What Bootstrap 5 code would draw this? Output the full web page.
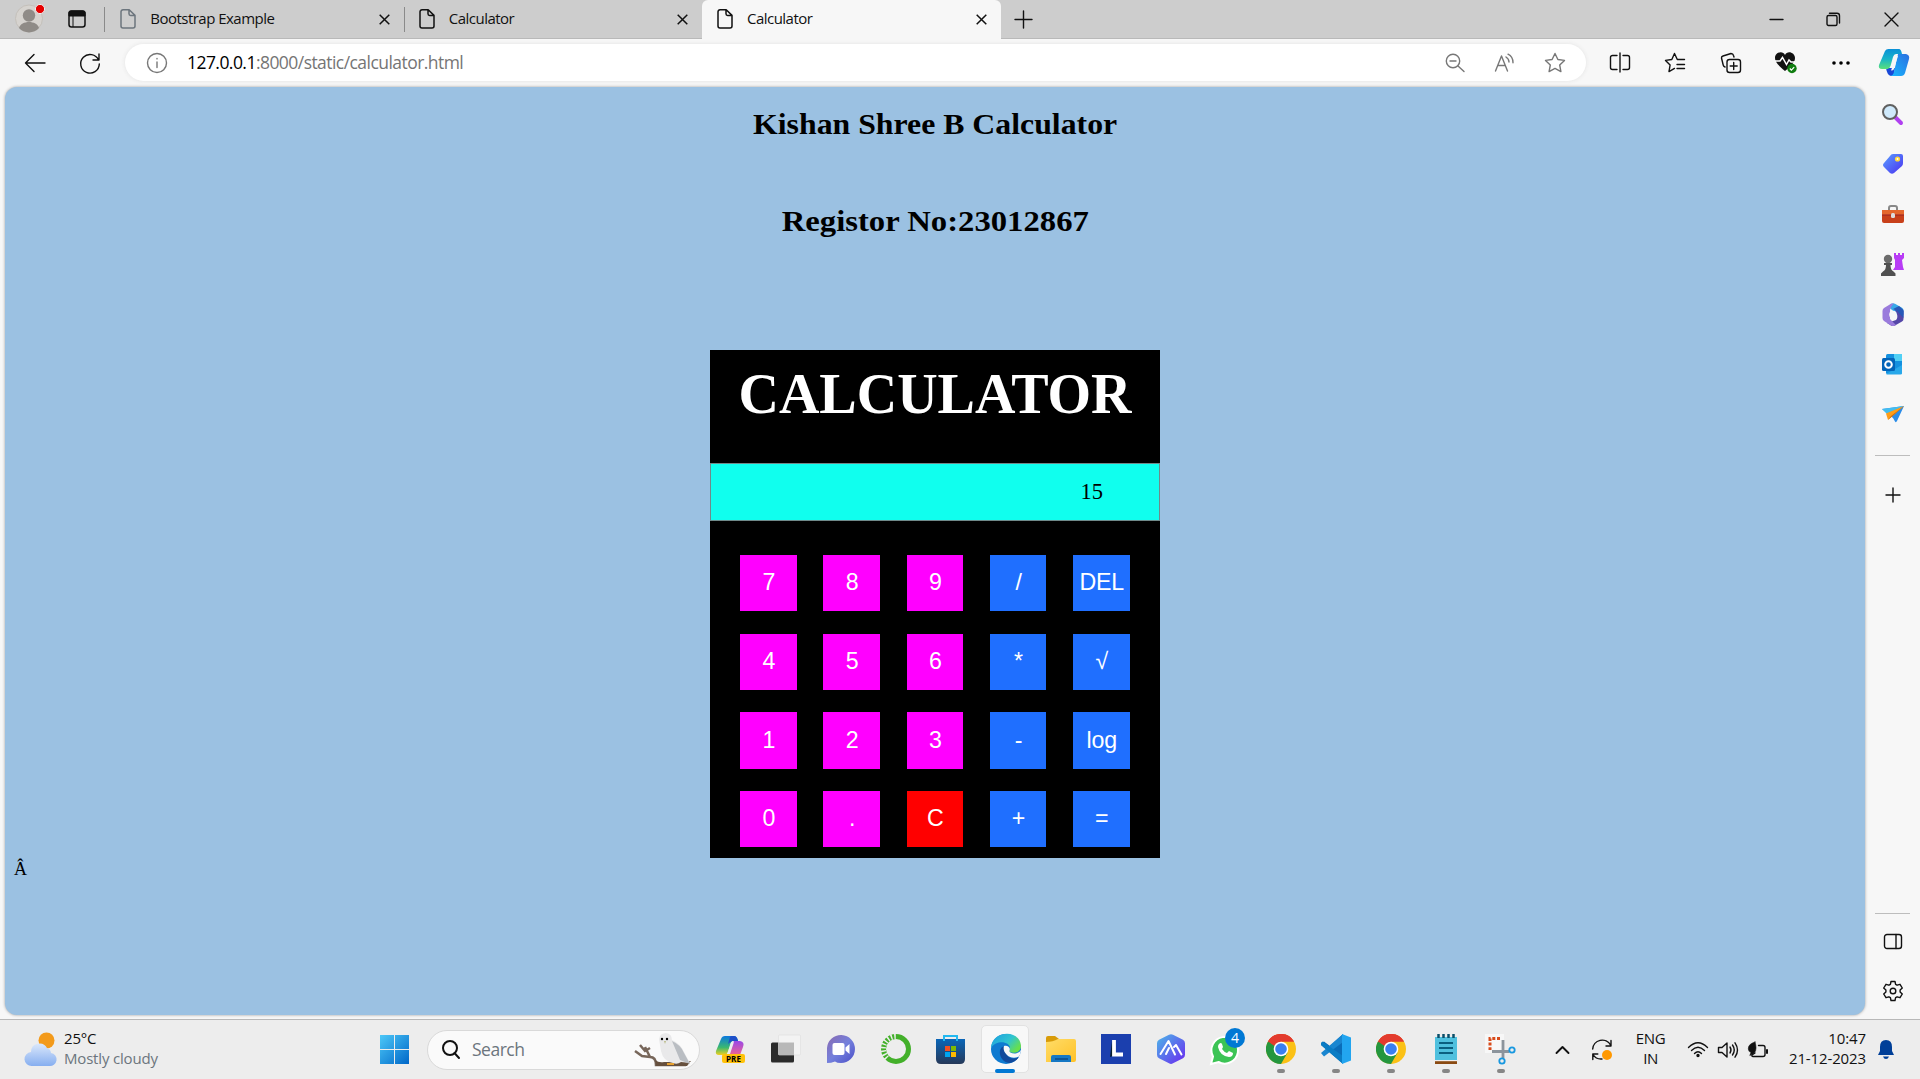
<!DOCTYPE html>
<html lang="en">
<head>
<meta charset="utf-8">
<title>Calculator</title>
<link rel="stylesheet" href="https://cdn.jsdelivr.net/npm/bootstrap@5.3.0/dist/css/bootstrap.min.css">
<style>
body{width:1920px;height:1079px;overflow:hidden;background:#f7f7f7;font-family:"Open Sans","Noto Sans",sans-serif;font-size:15px;line-height:20px;color:#111}
svg{display:block;overflow:visible;flex:none}
.ln{fill:none;stroke:#111;stroke-width:1.4;stroke-linecap:round;stroke-linejoin:round}
.gy{stroke:#777}
.tabstrip{height:39px;background:#cdcdcd;border-bottom:1px solid #b9b9b9;padding-left:9px}
.tabx{height:38px;white-space:nowrap;padding-right:14px}
.tab-on{width:299px;height:39px;background:#f7f7f7;border-radius:6px 6px 0 0;padding-bottom:1px}
.tab-off{width:298.5px}
.tab-first{width:299.5px}
.vsep{width:1.3px;height:25px;background:#8a8a8a}
.cellw{flex:none;display:flex;align-items:center;justify-content:center}
.tabt{letter-spacing:-.52px;margin-left:14px;margin-right:auto;padding-bottom:2px}
.toolbar{height:48px;padding-bottom:1px}
.urlbar{width:1461px;height:37px;border-radius:19px;background:#fff;box-shadow:0 0 4px #e3e3e3}
.urlt{font-size:17.5px;letter-spacing:-.55px;color:#757575;padding-bottom:1px;margin-left:-1px}
.pagebox{width:1860px;height:928px;background:#9bc1e2;border-radius:12px;box-shadow:0 0 3px #999;margin-left:5px}
.hd{font:bold 29px/34px "Georgia","Liberation Serif",serif;color:#000;margin:0;white-space:nowrap}
.hd-a{margin-top:20px;transform:scaleX(1.096)}
.hd-b{margin-top:63px;transform:scaleX(1.127)}
.calc{width:450px;height:508px;background:#000;margin-top:112px}
.calct{font:bold 56px/64px "Times New Roman","Liberation Serif",serif;color:#fff;margin:0;height:113px;padding-top:12px}
.disp{height:58px;background:#10ffee;border:1px solid #6f8a8a;font:22.5px/55px "Times New Roman","Liberation Serif",serif;color:#000;padding-right:56px}
.keys{display:grid;grid-template-columns:repeat(5,56.5px);grid-auto-rows:56.3px;column-gap:26.75px;row-gap:22.4px;padding:34px 0 0 30px}
.key{border:0;border-radius:0;padding:0 0 2px 1px;background:#f0f;color:#fff;font:23.2px/54px Arial,"Liberation Sans",sans-serif;letter-spacing:-.2px}
.op{background:#1f6fff}.clr{background:#f00}
.aa{font:18px/20px "Times New Roman","Liberation Serif",serif;color:#000;padding:1px 0 0 9px}
.side{width:55px;padding-top:2px}
.side .cellw{width:55px;height:50px}
.hsep{width:35px;height:1px;background:#bdbdbd}
.taskbar{height:60px;background:#ededed;border-top:1px solid #b8b8b8;margin-top:4px}
.pill{width:273px;height:40px;border-radius:20px;background:#fafafa;border:1px solid #d9d9d9}
.tk{width:55px;height:59px;position:relative;padding-bottom:1px}
.tk.run::after{content:"";position:absolute;left:23.5px;top:49px;width:8px;height:4px;border-radius:2px;background:#868686}
.tk.act::before{content:"";position:absolute;left:3px;top:5px;width:48px;height:48px;border-radius:5px;background:#f8f8f8;border:1px solid #e2e2e2}
.tk.act::after{content:"";position:absolute;left:17px;top:49px;width:20px;height:4px;border-radius:2px;background:#0078d4}
.tk svg{position:relative}
.num{position:absolute;left:27px;top:8px;width:20px;height:20px;border-radius:50%;background:#0078d4;color:#fff;font-size:14px;line-height:20px;text-align:center}
.tt{line-height:19.5px;white-space:nowrap;padding-bottom:2px}
</style>
<script src="https://cdn.jsdelivr.net/npm/bootstrap@5.3.0/dist/js/bootstrap.bundle.min.js"></script>
</head>
<body>
<svg width="0" height="0" class="position-absolute">
<defs>
<symbol id="doc" viewBox="0 0 16 20"><path d="M3 .8h6.2L15 6.4V17a2 2 0 0 1-2 2H3a2 2 0 0 1-2-2V2.800a2 2 0 0 1 2-2zM9 1v3.800a1.600 1.600 0 0 0 1.600 1.600H15" fill="none" stroke="currentColor" stroke-width="1.500" stroke-linejoin="round"/></symbol>
<symbol id="xx" viewBox="0 0 11 11"><path d="M.7.7l9.600 9.600M10.300.7L.7 10.300" fill="none" stroke="#111" stroke-width="1.500"/></symbol>
<linearGradient id="g1" x1="0" y1="0" x2="1" y2="1"><stop offset="0" stop-color="#4cc8f8"/><stop offset="1" stop-color="#0067c8"/></linearGradient>
<linearGradient id="g2" x1="0" y1="0" x2="0" y2="1"><stop offset="0" stop-color="#0a90d8"/><stop offset=".5" stop-color="#18b4c8"/><stop offset="1" stop-color="#5ae07a"/></linearGradient>
<linearGradient id="g3" x1="1" y1="0" x2="0" y2="1"><stop offset="0" stop-color="#2a6fe0"/><stop offset="1" stop-color="#18b8ff"/></linearGradient>
<linearGradient id="g4" x1="0" y1="0" x2="1" y2="1"><stop offset="0" stop-color="#5aa0ff"/><stop offset="1" stop-color="#4a30f0"/></linearGradient>
<linearGradient id="g5" x1="0" y1="0" x2="0" y2="1"><stop offset="0" stop-color="#9a48e8"/><stop offset="1" stop-color="#ff6a80"/></linearGradient>
<linearGradient id="g6" x1="0" y1="0" x2="0" y2="1"><stop offset="0" stop-color="#0a78e0"/><stop offset=".6" stop-color="#3ab870"/><stop offset="1" stop-color="#f0d020"/></linearGradient>
<linearGradient id="g7" x1="0" y1="0" x2="0" y2="1"><stop offset="0" stop-color="#0a66b8"/><stop offset="1" stop-color="#263858"/></linearGradient>
<linearGradient id="g8" x1="0" y1="0" x2="1" y2=".6"><stop offset="0" stop-color="#1b9de2"/><stop offset=".6" stop-color="#30c4d0"/><stop offset="1" stop-color="#68e04a"/></linearGradient>
<linearGradient id="g9" x1="0" y1="0" x2="1" y2="1"><stop offset="0" stop-color="#ffdc68"/><stop offset="1" stop-color="#ffc228"/></linearGradient>
<linearGradient id="g10" x1="0" y1="0" x2="0" y2="1"><stop offset="0" stop-color="#dbe8fb"/><stop offset="1" stop-color="#86aef0"/></linearGradient>
<linearGradient id="g11" x1="0" y1="0" x2="1" y2="1"><stop offset="0" stop-color="#8a6ab0"/><stop offset=".5" stop-color="#7480dc"/><stop offset="1" stop-color="#4b4fc8"/></linearGradient>
<linearGradient id="g12" x1="0" y1="0" x2="1" y2="1"><stop offset="0" stop-color="#4cb8e8"/><stop offset="1" stop-color="#6a28f0"/></linearGradient>
<symbol id="chrome" viewBox="0 0 30 30"><circle cx="15" cy="15" r="15" fill="#fbc116"/><path d="M15 15L2 7.500A15 15 0 0 1 28 7.500H15z" fill="#e33b2e"/><path d="M2 7.500A15 15 0 0 0 15 30l6.500-11.200L15 15z" fill="#24963f"/><path d="M2 7.500A15 15 0 0 1 28 7.500H15a7.500 7.500 0 0 0-7.300 6.200z" fill="#e33b2e"/><path d="M2 7.500l6.500 11.300 3-3L8.500 12z" fill="#24963f"/><circle cx="15" cy="15" r="7.300" fill="#fff"/><circle cx="15" cy="15" r="5.800" fill="#3a7ff0"/></symbol>
</defs>
</svg>

<header class="tabstrip d-flex">
  <div class="cellw" style="width:40px"><svg width="30" height="30" viewBox="0 0 30 30"><circle cx="15" cy="14.500" r="13.500" fill="#d6d3cf" stroke="#c4c0ba"/><circle cx="15" cy="11.500" r="6.200" fill="#8f8b87"/><path d="M5 24c2-8 18-8 20 0a13.500 13.500 0 0 1-20 0z" fill="#8f8b87"/><circle cx="26" cy="5" r="4.600" fill="#e60000" stroke="#eee"/></svg></div>
  <div class="cellw" style="width:55px"><svg width="18" height="18" viewBox="0 0 18 18"><rect x="1" y="1" width="16" height="16" rx="2.500" fill="none" stroke="#111" stroke-width="1.500"/><path d="M1 2.500Q1 1 3 1h12q2 0 2 1.500V6H1zM5 6v11" stroke="#111" fill="#111"/></svg></div>
  <div class="tabx tab-first d-flex align-items-center"><span class="vsep"></span><svg class="text-secondary" style="margin-left:15px" width="16" height="20"><use href="#doc"/></svg><span class="tabt">Bootstrap Example</span><svg width="11" height="11"><use href="#xx"/></svg></div>
  <div class="tabx tab-off d-flex align-items-center"><span class="vsep"></span><svg style="margin-left:14px" width="16" height="20"><use href="#doc"/></svg><span class="tabt">Calculator</span><svg width="11" height="11"><use href="#xx"/></svg></div>
  <div class="tabx tab-on d-flex align-items-center"><svg style="margin-left:15px" width="16" height="20"><use href="#doc"/></svg><span class="tabt">Calculator</span><svg width="11" height="11"><use href="#xx"/></svg></div>
  <div class="cellw" style="width:44px"><svg class="ln" width="17" height="17"><path d="M8.500 0v17M0 8.500h17"/></svg></div>
  <div class="d-flex ms-auto">
    <div class="cellw" style="width:57px"><svg class="ln" width="13" height="13"><path d="M0 6.500h13"/></svg></div>
    <div class="cellw" style="width:57px"><svg class="ln" width="13" height="13"><rect x="0" y="2.500" width="10" height="10" rx="1.500"/><path d="M2.500.2H10a2.500 2.500 0 0 1 2.500 2.500V10"/></svg></div>
    <div class="cellw" style="width:58px"><svg class="ln" width="13" height="13"><path d="M0 0l13 13M13 0L0 13"/></svg></div>
  </div>
</header>

<nav class="toolbar d-flex align-items-center">
  <div class="cellw" style="width:70px"><svg class="ln" width="20" height="18"><path d="M20 9H.5M9 .5L.5 9 9 17.500"/></svg></div>
  <div class="cellw" style="width:40px"><svg class="ln" width="20" height="20"><path d="M18.500 7A9.300 9.300 0 1 0 19.300 11M19 1v6h-6"/></svg></div>
  <div class="urlbar d-flex align-items-center" style="margin-left:15px">
    <div class="cellw" style="width:63px"><svg class="ln gy" width="20" height="20"><circle cx="10" cy="10" r="9.500"/><path d="M10 9v5.500M10 5.500v.4"/></svg></div>
    <span class="urlt"><span class="text-black">127.0.0.1</span>:8000/static/calculator.html</span>
    <div class="d-flex ms-auto" style="padding-right:6px">
      <div class="cellw" style="width:50px"><svg class="ln gy" width="18" height="18"><circle cx="7" cy="7" r="6.700"/><path d="M12 12l6 5.500M4 7h6"/></svg></div>
      <div class="cellw" style="width:50px"><svg class="ln gy" width="20" height="18"><path d="M.5 17L6.500 2l6 15M3 11.500h7M11 3q3 2 3 5M13 .2q5 2.500 5 8.500"/></svg></div>
      <div class="cellw" style="width:50px"><svg class="ln gy" width="20" height="19"><path d="M10 .5l2.900 6 6.600.9-4.800 4.600 1.200 6.600L10 15.400l-5.900 3.200L5.300 12 .5 7.400l6.600-.9z"/></svg></div>
    </div>
  </div>
  <div class="d-flex" style="margin-left:7px">
    <div class="cellw" style="width:54px"><svg class="ln" width="20" height="19"><path d="M7 2.500H2.500a2 2 0 0 0-2 2v10a2 2 0 0 0 2 2H7M13 2.500h4.500a2 2 0 0 1 2 2v10a2 2 0 0 1-2 2H13M10 0v19"/></svg></div>
    <div class="cellw" style="width:56px"><svg class="ln" width="20" height="19"><path d="M19.500 6.500H12.300L9.500.5 6.800 6.500.5 7.400l4.600 4.600L4 18.600l5.500-3.200M12 11.500h7.500M12 15.500h7.500"/></svg></div>
    <div class="cellw" style="width:55px"><svg class="ln" width="20" height="20"><rect x="6" y="6.500" width="13.500" height="13" rx="2.500"/><path d="M12.700 9.500v7M9.200 13h7M4 14q-1.500-.5-1.800-2L.5 5Q.3 3.500 2 3l8-2.500q2 0 2.500 2l.5 1.500"/></svg></div>
    <div class="cellw" style="width:55px"><svg width="22" height="21"><path d="M10 19C3 13 0 10 0 6c0-6 8-8 10-3 2-5 10-3 10 3 0 4-3 7-10 13z" fill="#111"/><path d="M0 9h5l2.500-3.500 4 7L14 8l2 2h4" fill="none" stroke="#fff" stroke-width="1.500"/><circle cx="17" cy="16.500" r="4.700" fill="#107c10"/><path d="M14.800 16.500l1.600 1.600 2.800-3" fill="none" stroke="#fff" stroke-width="1.200"/></svg></div>
    <div class="cellw" style="width:55px"><svg width="18" height="4"><circle cx="2" cy="2" r="1.800"/><circle cx="9" cy="2" r="1.800"/><circle cx="16" cy="2" r="1.800"/></svg></div>
    <div class="cellw" style="width:52px"><svg width="30" height="27" viewBox="0 0 30 27"><path d="M7 19h9l-1 6q-1 2-3 2-4-1-5-8z" fill="#1848d8"/><path d="M6 2Q7 0 9.500 0H20q2 0 3 5h-6q-2 0-3 3l-2.500 9q-1 3-3 3H3q-4 0-3-4z" fill="url(#g2)"/><path d="M19 5h8q4 1 3 5l-4 14q-1 3-4 3H11q3 0 4-4l3-14q1-3 1-4z" fill="url(#g3)"/><path d="M17 8q.5-1 2-1l-4 13q-.5 1.500-3 1.500z" fill="#f7f7f7"/></svg></div>
  </div>
</nav>

<div class="d-flex">
  <main class="pagebox d-flex flex-column align-items-center">
    <h2 class="hd hd-a">Kishan Shree B Calculator</h2>
    <h2 class="hd hd-b">Registor No:23012867</h2>
    <section class="calc">
      <h1 class="calct text-center">CALCULATOR</h1>
      <div class="disp text-end">15</div>
      <div class="keys">
        <button class="key">7</button><button class="key">8</button><button class="key">9</button><button class="key op">/</button><button class="key op">DEL</button>
        <button class="key">4</button><button class="key">5</button><button class="key">6</button><button class="key op">*</button><button class="key op">√</button>
        <button class="key">1</button><button class="key">2</button><button class="key">3</button><button class="key op">-</button><button class="key op">log</button>
        <button class="key">0</button><button class="key">.</button><button class="key clr">C</button><button class="key op">+</button><button class="key op">=</button>
      </div>
    </section>
    <div class="aa align-self-start">Â</div>
  </main>
  <aside class="side d-flex flex-column align-items-center">
    <div class="cellw"><svg width="21" height="21"><path d="M13 13l6 6" stroke="#b040f0" stroke-width="4" stroke-linecap="round"/><circle cx="8" cy="8" r="7" fill="#cfe9fb" stroke="#606060" stroke-width="2"/></svg></div>
    <div class="cellw"><svg width="22" height="22"><path d="M11 1h8q2 0 2 2v7q0 2-1 3l-8 7q-2 1.500-4 0l-6-6q-2-2 0-4l6-7q1-2 3-2z" fill="url(#g4)"/><circle cx="15.500" cy="6" r="2.600" fill="#ffd83a"/><circle cx="15.500" cy="6" r="1" fill="#fff"/></svg></div>
    <div class="cellw"><svg width="22" height="20"><path d="M7 7V4q0-2 2-2h4q2 0 2 2v3" fill="none" stroke="#888" stroke-width="2"/><rect y="6" width="22" height="13" rx="2" fill="#c8401a"/><path d="M0 6h22v5H0z" fill="#e5672c"/><path d="M0 11h22" stroke="#922"/><rect x="9" y="9" width="4" height="5" rx="1.500" fill="#ddd"/></svg></div>
    <div class="cellw"><svg width="23" height="23"><path d="M13 0h2v2h2V0h2v2h2V0h2v5l-2 2 1 7 1 3H12l2-3V7l-1-2z" fill="#b83cf5"/><circle cx="7" cy="6" r="4.200" fill="#6b6b6b"/><path d="M3 10h8v2H9.500q0 5 3 6.500l2 2V23H0v-2.500l2-2q3-1.500 3-6.500H3z" fill="#505050"/></svg></div>
    <div class="cellw"><svg width="22" height="23"><path d="M9 .8q2-1.200 4 0l7 4q1.500 1 1.500 3v4H15l-4-4-5-4z" fill="#38a8e8"/><path d="M21.500 8v8q0 1.500-1.500 2.500l-7 4q-2 1-4 0L5 20l9-3q2-2 1-6l-2-4z" fill="#5547a8"/><path d="M9 .8L2 5Q.5 6 .5 8v7q0 2 1.500 3l7 4.500q2 1 4 0l1-.5-6-6V8q0-4 4-7.500z" fill="#9a7bdc"/><path d="M15 8l-4-2 6-3 4.500 4v8z" fill="#2758b8"/><circle cx="11" cy="11.500" r="3.800" fill="#f7f7f7"/></svg></div>
    <div class="cellw"><svg width="21" height="21"><rect x="4" y="0" width="16" height="20" rx="1.500" fill="#1490df"/><path d="M12 0h8v7h-8z" fill="#50d0f5"/><path d="M4 20l16-9v8q0 1.500-1.500 1.500H5z" fill="#28a8ea"/><rect y="4" width="13" height="13" rx="1.500" fill="#0364b8"/><circle cx="6.500" cy="10.500" r="3.300" fill="none" stroke="#fff" stroke-width="2"/></svg></div>
    <div class="cellw"><svg width="22" height="18"><path d="M0 4L22 1 15 16q-1 2-2 .5L11 13z" fill="#2a8ce8"/><path d="M0 4L22 1 5 9z" fill="#42bdf0"/><path d="M22 1L4 8.500 6 15z" fill="#ff9d18"/><path d="M22 1L6 15l3-4z" fill="#c46a10"/></svg></div>
    <div class="hsep" style="margin-top:16px"></div>
    <svg class="ln" style="margin-top:32px" width="14" height="14"><path d="M7 0v14M0 7h14"/></svg>
    <div class="hsep" style="margin-top:411px"></div>
    <svg class="ln" style="margin-top:20px" width="18" height="15"><rect x=".5" y=".5" width="17" height="14" rx="2.500"/><path d="M12 .5v14"/></svg>
    <svg class="ln" style="margin-top:32px" width="20" height="20" viewBox="0 0 20 20"><circle cx="10" cy="10" r="2.800"/><path d="M8 .5h4l.6 2.900 1.500.8 2.900-.9 2.300 3.700-2.200 2v2l2.200 2-2.300 3.700-2.900-.9-1.500.8-.6 2.900H8l-.6-2.900-1.500-.8-2.900.9L.7 13l2.200-2V9L.7 7 3 3.300l2.900.9 1.500-.8z"/></svg>
  </aside>
</div>

<footer class="taskbar d-flex align-items-center">
  <div class="d-flex align-items-center" style="width:380px;padding-left:25px">
    <svg width="31" height="35"><circle cx="21.500" cy="8.500" r="8" fill="#f39a1a"/><path d="M7 34a7 7 0 0 1-1-14 8.500 8.500 0 0 1 16-4 6 6 0 0 1 4 5 6.500 6.500 0 0 1-2 13z" fill="url(#g10)"/></svg>
    <div class="tt" style="padding-left:8px;letter-spacing:-.18px">25°C<br><span class="text-secondary">Mostly cloudy</span></div>
  </div>
  <svg width="29" height="29"><path d="M0 0h14v14H0zM15 0h14v14H15zM0 15h14v14H0zM15 15h14v14H15z" fill="url(#g1)"/></svg>
  <div class="pill d-flex align-items-center" style="margin-left:18px">
    <svg class="ln" style="margin-left:14px;stroke-width:2" width="18" height="19"><circle cx="8" cy="8" r="7"/><path d="M12.500 13l4.500 5"/></svg>
    <span class="text-secondary" style="font-size:17.5px;padding:0 0 1px 12px;letter-spacing:-.5px">Search</span>
    <svg class="ms-auto" style="margin-right:7px" width="58" height="34" viewBox="0 0 58 34"><path d="M1 18l7 5 8 1-5-10M6 12l5 6 5-3M16 24q6 0 6 8h30" fill="none" stroke="#77665a" stroke-width="2.500"/><path d="M21 27q4 3 9 2l20 0 7-1-4 5H22z" fill="#66503e"/><path d="M25 6q1-6 7-6 6 1 6 7 9 4 12 12l6 11-9-1q-4 3-8 1-10-2-12-12-1-6-2-12z" fill="#e9e9ea"/><path d="M38 8q9 4 12 12l6 11-10-4z" fill="#b9bdc2"/><circle cx="28" cy="6" r="1.200"/><circle cx="33" cy="6" r="1.200"/><path d="M30 8l1 3 1-3z" fill="#bb8"/><path d="M33 30h7v2h-7z" fill="#e6a030"/></svg>
  </div>
  <div class="d-flex" style="margin-left:3px">
    <div class="tk cellw"><svg width="30" height="29" style="top:1px"><path d="M5 3Q6 0 9 0h9q3 0 4 5h-5q-2 0-3 4l-2 7q-1 3-4 3H3q-4 0-3-4z" fill="url(#g6)"/><path d="M18 5h6q5 1 3 6l-3 8q-1 3-4 3h-9l4-10q1-5 3-7z" fill="url(#g5)"/><path d="M15 0h3q3 0 4 5h-6q-2 1-4 3l2-7z" fill="#1e4fc8"/><path d="M15 7.500q1-1.500 3-1.500l-4 12h-3z" fill="#ededed"/><rect x="6" y="18" width="23" height="9" rx="2" fill="#ffc20a"/><text x="17.500" y="25.600" text-anchor="middle" font-size="8" font-weight="bold" font-family="Open Sans">PRE</text></svg></div>
    <div class="tk cellw"><svg width="30" height="28"><rect y="7.500" width="23" height="20" rx="1.500" fill="#2b2b2b"/><rect x="7.500" width="22" height="20" rx="1" fill="#f3f3f3" stroke="#ddd" stroke-width=".6"/><path d="M7.500 7.500H23V20H7.500z" fill="#b8b8b8"/></svg></div>
    <div class="tk cellw"><svg width="29" height="28"><path d="M1 28V13A14 14 0 1 1 15 28q-4 0-6-1.500Q5 28 1 28z" fill="url(#g11)"/><rect x="6.500" y="8" width="12" height="12" rx="2" fill="#fff"/><path d="M19.500 12.500l4-3.500v10l-4-3.500z" fill="#fff"/></svg></div>
    <div class="tk cellw"><svg width="30" height="30"><circle cx="15" cy="15" r="12.500" fill="none" stroke="#43b02a" stroke-width="5"/><path d="M6 24A12.500 12.500 0 0 1 15 2.500" fill="none" stroke="#ededed" stroke-width="5.500" stroke-dasharray="1.500 2"/></svg></div>
    <div class="tk cellw"><svg width="29" height="29"><path d="M0 4h29v20q0 5-5 5H5q-5 0-5-5z" fill="url(#g7)"/><path d="M8 6V1h13v5" fill="none" stroke="#22b8f0" stroke-width="2"/><path d="M9 11h5v5H9z" fill="#f25022"/><path d="M15 11h5v5h-5z" fill="#7fba00"/><path d="M9 17h5v5H9z" fill="#00a4ef"/><path d="M15 17h5v5h-5z" fill="#ffb900"/></svg></div>
    <div class="tk act cellw"><svg width="30" height="30"><circle cx="15" cy="15" r="15" fill="#0f7ad0"/><path d="M0 14C1-4 29-5 30 12c0 6-6 8-11 6-2-1 0-2 0-4 0-6-13-9-19 0z" fill="url(#g8)"/><path d="M11 13c-5 5-1 16 8 16 4-.5 7-3 9-6-4 2-9 2-11-1-3-3-4-6-2-9q-2-1-4 0z" fill="#114a9c"/><path d="M13 12c3-1 7 1 5.500 4.500-1 2 3 3.500 7 2.800q3-.5 4.500-3.300-.3 4-2 6.500c-4 2-9 1.500-12-1.500-3-3-4-6-3-9z" fill="#f8f8f8"/></svg></div>
    <div class="tk cellw"><svg width="30" height="27"><path d="M0 2q0-2 2-2h7l4 3v8H0z" fill="#d89b08"/><path d="M0 6q7 0 12-3h16q2 0 2 2v19q0 2-2 2H0z" fill="url(#g9)"/><path d="M5 26v-5q0-2 2-2h16q2 0 2 2v5z" fill="#1678c4"/><path d="M9 23h13" stroke="#0a4a88" stroke-width="1.500"/></svg></div>
    <div class="tk cellw"><svg width="30" height="30"><path d="M0 0h30v30H0z" fill="#1b3fae"/><path d="M11 7L9 23l5-2" fill="#0a2030"/><path d="M13 6v14.500h9" fill="none" stroke="#fff" stroke-width="3.800"/></svg></div>
    <div class="tk cellw"><svg width="28" height="30"><path d="M12 .8q2-1.200 4 0l10 5q2 1.200 2 3.500v11.500q0 2-2 3.500l-10 5q-2 1.200-4 0l-10-5q-2-1-2-3.500V9.300Q0 7 2 5.800z" fill="url(#g12)"/><path d="M3.500 20l8-13 6.500 13.500M9 20l3-6M17 13l2-2 5.500 9.500" fill="none" stroke="#fff" stroke-width="2" stroke-linecap="round" stroke-linejoin="round"/></svg></div>
    <div class="tk cellw"><svg width="28" height="29" style="left:-1px;top:1px"><path d="M0 28l2-7.500a13.300 13.300 0 1 1 5.500 5.500z" fill="#3cc455" stroke="#fff" stroke-width="2"/><path d="M8 8q2-2 3 0l1 3-1 2q2 3 5 4l2-2 4 2q0 4-4 4-9-1-11-10 0-2 1-3z" fill="#fff"/></svg><span class="num">4</span></div>
    <div class="tk run cellw"><svg width="30" height="30"><use href="#chrome"/></svg></div>
    <div class="tk run cellw"><svg width="30" height="30"><path d="M22 0L9 12 3 7.500 0 9v2l21 18V8z" fill="#0a6cb8"/><path d="M0 19l3 3.500L22 8V0z" fill="#1a86d0"/><path d="M0 9l1.500-1.500L22 22v8L0 11z" fill="#0a7cc4"/><path d="M21 0l9 3.500v23L21 30z" fill="#22a5f0"/></svg></div>
    <div class="tk run cellw"><svg width="30" height="30"><use href="#chrome"/></svg></div>
    <div class="tk run cellw"><svg width="22" height="30"><path d="M0 3h22v24H0z" fill="#4fc0de"/><path d="M0 27h22v3H0z" fill="#8a4a12"/><path d="M0 26h22v1.200H0z" fill="#eee"/><path d="M3.500 0v4M8.500 0v4M13.500 0v4M18.500 0v4" stroke="#0b4f6a" stroke-width="2.500"/><path d="M4 9h14M4 14h14M4 19h14" stroke="#0b5f80" stroke-width="1.800"/></svg></div>
    <div class="tk run cellw"><svg width="28" height="30"><rect x="-2" y="0" width="19" height="19" fill="#f7f7f7"/><path d="M13 4.500H3V16" fill="none" stroke="#d84a1a" stroke-width="3" stroke-dasharray="3 1.700"/><path d="M16 6v18M5 17.500h17" stroke="#8c949c" stroke-width="2.800"/><circle cx="25" cy="16" r="2.700" fill="none" stroke="#1898e0" stroke-width="1.800"/><circle cx="15" cy="27" r="2.700" fill="none" stroke="#1898e0" stroke-width="1.800"/></svg></div>
  </div>
  <div class="d-flex align-items-center" style="margin-left:14px">
    <div class="cellw" style="width:40px"><svg class="ln" style="stroke-width:1.900" width="13" height="8"><path d="M.5 7l6-6 6 6"/></svg></div>
    <div class="cellw" style="width:40px"><svg class="ln" width="20" height="20"><path d="M.7 9A9.500 9.500 0 0 1 18.500 5M19 .5V6h-5M.8 19.500V14h5M1 14.500q3 5 9 4.500"/><circle cx="15" cy="15" r="5" fill="#ff9800" stroke="none"/></svg></div>
    <div class="tt text-center" style="width:57px;letter-spacing:-.4px">ENG<br>IN</div>
    <div class="cellw" style="width:37px"><svg class="ln" width="20" height="15"><path d="M.5 5.500q9.500-9.500 19 0M3.500 8.500q6.500-6.500 13 0M6.500 11.500q3.500-3.500 7 0"/><circle cx="10" cy="13.500" r="1" fill="#111"/></svg></div>
    <div class="cellw" style="width:24px"><svg class="ln" width="20" height="16"><path d="M.5 5.500v5H4l5 4.500V1L4 5.500zM12 5q2 3 0 6M14.500 3q3.500 5 0 10M17 .8q5 7.200 0 14.400"/></svg></div>
    <div class="cellw" style="width:36px"><svg class="ln" width="20" height="16"><path d="M10.500 3.500h4.500q2 0 2 2v7q0 2-2 2H5q-1.500 0-1-1.500l3-2"/><path d="M19 8v3" stroke-width="2"/><path d="M7 0Q0 2 .3 7q.3 3 2.700 3.500l-1.200 3Q8 11.500 8 6q0-3-1-6z" fill="#111" stroke-width=".6"/></svg></div>
    <div class="tt text-end" style="width:90px;letter-spacing:-.12px">10:47<br>21-12-2023</div>
    <svg style="margin-left:12px" width="16" height="19"><path d="M8 0q6 0 6 7v4l2 4H0l2-4V7q0-7 6-7zM5 16.500h6q-1 2.500-3 2.500t-3-2.500z" fill="#003f98"/></svg>
  </div>
</footer>
</body>
</html>
